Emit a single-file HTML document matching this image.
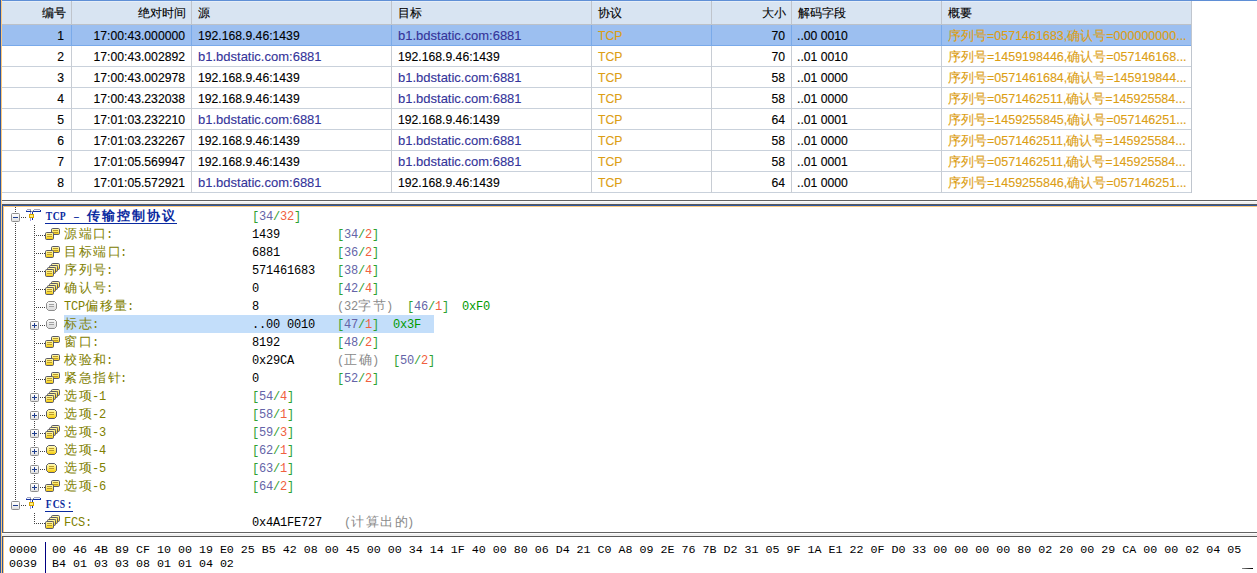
<!DOCTYPE html><html><head><meta charset="utf-8"><style>
*{margin:0;padding:0;box-sizing:border-box}
html,body{width:1257px;height:573px;overflow:hidden;background:#fff;position:relative}
.a{position:absolute}
.t{position:absolute;white-space:pre;font-family:"Liberation Sans",sans-serif;font-size:12.2px;line-height:20px;color:#000;-webkit-text-stroke:0.12px currentColor}
.m{position:absolute;white-space:pre;font-family:"Liberation Mono",monospace;font-size:11.67px;line-height:18px;color:#000}
.r{text-align:right}
.lk{color:#34349a;font-size:13px}
.or{color:#dc9e14}
.sm{font-size:12.5px}
.cj{position:absolute;white-space:pre;font-family:"Liberation Sans",sans-serif;font-size:12.5px;letter-spacing:1.5px;line-height:18px;font-weight:300}
.as{position:absolute;white-space:pre;font-family:"Liberation Mono",monospace;font-size:12px;letter-spacing:-0.2px;line-height:18px;margin-top:1px}
.bs{position:absolute;width:7px;text-align:center;white-space:pre;font-family:"Liberation Serif",serif;font-weight:bold;font-size:12px;line-height:18px;transform:scaleX(.8)}
.hx{position:absolute;white-space:pre;font-family:"Liberation Mono",monospace;font-size:11.67px;line-height:14px;color:#000}
</style></head><body>

<div class="a" style="left:0;top:0;width:1px;height:573px;background:#2e58a0"></div>
<div class="a" style="left:1px;top:0;width:1px;height:573px;background:#fdc87c"></div>
<div class="a" style="left:2px;top:0;width:1255px;height:1px;background:#5f8fd6"></div>
<div class="a" style="left:2px;top:1px;width:1190px;height:23px;background:#d8e4f2"></div>
<div class="a" style="left:2px;top:1px;width:1190px;height:1px;background:#e6eef8"></div>
<div class="a" style="left:2px;top:24px;width:1190px;height:1px;background:#bcc1c8"></div>
<div class="a" style="left:71px;top:1px;width:1px;height:24px;background:#bfc4cc"></div>
<div class="a" style="left:191px;top:1px;width:1px;height:24px;background:#bfc4cc"></div>
<div class="a" style="left:391px;top:1px;width:1px;height:24px;background:#bfc4cc"></div>
<div class="a" style="left:591px;top:1px;width:1px;height:24px;background:#bfc4cc"></div>
<div class="a" style="left:711px;top:1px;width:1px;height:24px;background:#bfc4cc"></div>
<div class="a" style="left:791px;top:1px;width:1px;height:24px;background:#bfc4cc"></div>
<div class="a" style="left:941px;top:1px;width:1px;height:24px;background:#bfc4cc"></div>
<div class="a" style="left:1191px;top:1px;width:1px;height:24px;background:#bfc4cc"></div>
<div class="a" style="left:2px;top:25px;width:1190px;height:21px;background:#9cbff0"></div>
<div class="a" style="left:2px;top:45px;width:1190px;height:1px;background:#78a9ea"></div>
<div class="a" style="left:71px;top:25px;width:1px;height:21px;background:#7aaae9"></div>
<div class="a" style="left:191px;top:25px;width:1px;height:21px;background:#7aaae9"></div>
<div class="a" style="left:391px;top:25px;width:1px;height:21px;background:#7aaae9"></div>
<div class="a" style="left:591px;top:25px;width:1px;height:21px;background:#7aaae9"></div>
<div class="a" style="left:711px;top:25px;width:1px;height:21px;background:#7aaae9"></div>
<div class="a" style="left:791px;top:25px;width:1px;height:21px;background:#7aaae9"></div>
<div class="a" style="left:941px;top:25px;width:1px;height:21px;background:#7aaae9"></div>
<div class="a" style="left:1191px;top:25px;width:1px;height:21px;background:#7aaae9"></div>
<div class="a" style="left:2px;top:66px;width:1190px;height:1px;background:#c9d1db"></div>
<div class="a" style="left:71px;top:46px;width:1px;height:21px;background:#c8cdd4"></div>
<div class="a" style="left:191px;top:46px;width:1px;height:21px;background:#c8cdd4"></div>
<div class="a" style="left:391px;top:46px;width:1px;height:21px;background:#c8cdd4"></div>
<div class="a" style="left:591px;top:46px;width:1px;height:21px;background:#c8cdd4"></div>
<div class="a" style="left:711px;top:46px;width:1px;height:21px;background:#c8cdd4"></div>
<div class="a" style="left:791px;top:46px;width:1px;height:21px;background:#c8cdd4"></div>
<div class="a" style="left:941px;top:46px;width:1px;height:21px;background:#c8cdd4"></div>
<div class="a" style="left:1191px;top:46px;width:1px;height:21px;background:#c8cdd4"></div>
<div class="a" style="left:2px;top:87px;width:1190px;height:1px;background:#c9d1db"></div>
<div class="a" style="left:71px;top:67px;width:1px;height:21px;background:#c8cdd4"></div>
<div class="a" style="left:191px;top:67px;width:1px;height:21px;background:#c8cdd4"></div>
<div class="a" style="left:391px;top:67px;width:1px;height:21px;background:#c8cdd4"></div>
<div class="a" style="left:591px;top:67px;width:1px;height:21px;background:#c8cdd4"></div>
<div class="a" style="left:711px;top:67px;width:1px;height:21px;background:#c8cdd4"></div>
<div class="a" style="left:791px;top:67px;width:1px;height:21px;background:#c8cdd4"></div>
<div class="a" style="left:941px;top:67px;width:1px;height:21px;background:#c8cdd4"></div>
<div class="a" style="left:1191px;top:67px;width:1px;height:21px;background:#c8cdd4"></div>
<div class="a" style="left:2px;top:108px;width:1190px;height:1px;background:#c9d1db"></div>
<div class="a" style="left:71px;top:88px;width:1px;height:21px;background:#c8cdd4"></div>
<div class="a" style="left:191px;top:88px;width:1px;height:21px;background:#c8cdd4"></div>
<div class="a" style="left:391px;top:88px;width:1px;height:21px;background:#c8cdd4"></div>
<div class="a" style="left:591px;top:88px;width:1px;height:21px;background:#c8cdd4"></div>
<div class="a" style="left:711px;top:88px;width:1px;height:21px;background:#c8cdd4"></div>
<div class="a" style="left:791px;top:88px;width:1px;height:21px;background:#c8cdd4"></div>
<div class="a" style="left:941px;top:88px;width:1px;height:21px;background:#c8cdd4"></div>
<div class="a" style="left:1191px;top:88px;width:1px;height:21px;background:#c8cdd4"></div>
<div class="a" style="left:2px;top:129px;width:1190px;height:1px;background:#c9d1db"></div>
<div class="a" style="left:71px;top:109px;width:1px;height:21px;background:#c8cdd4"></div>
<div class="a" style="left:191px;top:109px;width:1px;height:21px;background:#c8cdd4"></div>
<div class="a" style="left:391px;top:109px;width:1px;height:21px;background:#c8cdd4"></div>
<div class="a" style="left:591px;top:109px;width:1px;height:21px;background:#c8cdd4"></div>
<div class="a" style="left:711px;top:109px;width:1px;height:21px;background:#c8cdd4"></div>
<div class="a" style="left:791px;top:109px;width:1px;height:21px;background:#c8cdd4"></div>
<div class="a" style="left:941px;top:109px;width:1px;height:21px;background:#c8cdd4"></div>
<div class="a" style="left:1191px;top:109px;width:1px;height:21px;background:#c8cdd4"></div>
<div class="a" style="left:2px;top:150px;width:1190px;height:1px;background:#c9d1db"></div>
<div class="a" style="left:71px;top:130px;width:1px;height:21px;background:#c8cdd4"></div>
<div class="a" style="left:191px;top:130px;width:1px;height:21px;background:#c8cdd4"></div>
<div class="a" style="left:391px;top:130px;width:1px;height:21px;background:#c8cdd4"></div>
<div class="a" style="left:591px;top:130px;width:1px;height:21px;background:#c8cdd4"></div>
<div class="a" style="left:711px;top:130px;width:1px;height:21px;background:#c8cdd4"></div>
<div class="a" style="left:791px;top:130px;width:1px;height:21px;background:#c8cdd4"></div>
<div class="a" style="left:941px;top:130px;width:1px;height:21px;background:#c8cdd4"></div>
<div class="a" style="left:1191px;top:130px;width:1px;height:21px;background:#c8cdd4"></div>
<div class="a" style="left:2px;top:171px;width:1190px;height:1px;background:#c9d1db"></div>
<div class="a" style="left:71px;top:151px;width:1px;height:21px;background:#c8cdd4"></div>
<div class="a" style="left:191px;top:151px;width:1px;height:21px;background:#c8cdd4"></div>
<div class="a" style="left:391px;top:151px;width:1px;height:21px;background:#c8cdd4"></div>
<div class="a" style="left:591px;top:151px;width:1px;height:21px;background:#c8cdd4"></div>
<div class="a" style="left:711px;top:151px;width:1px;height:21px;background:#c8cdd4"></div>
<div class="a" style="left:791px;top:151px;width:1px;height:21px;background:#c8cdd4"></div>
<div class="a" style="left:941px;top:151px;width:1px;height:21px;background:#c8cdd4"></div>
<div class="a" style="left:1191px;top:151px;width:1px;height:21px;background:#c8cdd4"></div>
<div class="a" style="left:2px;top:192px;width:1190px;height:1px;background:#c9d1db"></div>
<div class="a" style="left:71px;top:172px;width:1px;height:21px;background:#c8cdd4"></div>
<div class="a" style="left:191px;top:172px;width:1px;height:21px;background:#c8cdd4"></div>
<div class="a" style="left:391px;top:172px;width:1px;height:21px;background:#c8cdd4"></div>
<div class="a" style="left:591px;top:172px;width:1px;height:21px;background:#c8cdd4"></div>
<div class="a" style="left:711px;top:172px;width:1px;height:21px;background:#c8cdd4"></div>
<div class="a" style="left:791px;top:172px;width:1px;height:21px;background:#c8cdd4"></div>
<div class="a" style="left:941px;top:172px;width:1px;height:21px;background:#c8cdd4"></div>
<div class="a" style="left:1191px;top:172px;width:1px;height:21px;background:#c8cdd4"></div>
<div class="t r" style="left:2px;top:3px;width:64px">编号</div>
<div class="t r" style="left:72px;top:3px;width:114px">绝对时间</div>
<div class="t" style="left:198px;top:3px">源</div>
<div class="t" style="left:398px;top:3px">目标</div>
<div class="t" style="left:598px;top:3px">协议</div>
<div class="t r" style="left:712px;top:3px;width:74px">大小</div>
<div class="t" style="left:798px;top:3px">解码字段</div>
<div class="t" style="left:948px;top:3px">概要</div>
<div class="t r" style="left:2px;top:26px;width:62px">1</div>
<div class="t r" style="left:72px;top:26px;width:113px">17:00:43.000000</div>
<div class="t" style="left:198px;top:26px">192.168.9.46:1439</div>
<div class="t lk" style="left:398px;top:26px">b1.bdstatic.com:6881</div>
<div class="t or" style="left:598px;top:26px">TCP</div>
<div class="t r" style="left:712px;top:26px;width:73px">70</div>
<div class="t" style="left:797px;top:26px">..00 0010</div>
<div class="t or sm" style="left:948px;top:26px">序列号=0571461683,确认号=000000000...</div>
<div class="t r" style="left:2px;top:47px;width:62px">2</div>
<div class="t r" style="left:72px;top:47px;width:113px">17:00:43.002892</div>
<div class="t lk" style="left:198px;top:47px">b1.bdstatic.com:6881</div>
<div class="t" style="left:398px;top:47px">192.168.9.46:1439</div>
<div class="t or" style="left:598px;top:47px">TCP</div>
<div class="t r" style="left:712px;top:47px;width:73px">70</div>
<div class="t" style="left:797px;top:47px">..01 0010</div>
<div class="t or sm" style="left:948px;top:47px">序列号=1459198446,确认号=057146168...</div>
<div class="t r" style="left:2px;top:68px;width:62px">3</div>
<div class="t r" style="left:72px;top:68px;width:113px">17:00:43.002978</div>
<div class="t" style="left:198px;top:68px">192.168.9.46:1439</div>
<div class="t lk" style="left:398px;top:68px">b1.bdstatic.com:6881</div>
<div class="t or" style="left:598px;top:68px">TCP</div>
<div class="t r" style="left:712px;top:68px;width:73px">58</div>
<div class="t" style="left:797px;top:68px">..01 0000</div>
<div class="t or sm" style="left:948px;top:68px">序列号=0571461684,确认号=145919844...</div>
<div class="t r" style="left:2px;top:89px;width:62px">4</div>
<div class="t r" style="left:72px;top:89px;width:113px">17:00:43.232038</div>
<div class="t" style="left:198px;top:89px">192.168.9.46:1439</div>
<div class="t lk" style="left:398px;top:89px">b1.bdstatic.com:6881</div>
<div class="t or" style="left:598px;top:89px">TCP</div>
<div class="t r" style="left:712px;top:89px;width:73px">58</div>
<div class="t" style="left:797px;top:89px">..01 0000</div>
<div class="t or sm" style="left:948px;top:89px">序列号=0571462511,确认号=145925584...</div>
<div class="t r" style="left:2px;top:110px;width:62px">5</div>
<div class="t r" style="left:72px;top:110px;width:113px">17:01:03.232210</div>
<div class="t lk" style="left:198px;top:110px">b1.bdstatic.com:6881</div>
<div class="t" style="left:398px;top:110px">192.168.9.46:1439</div>
<div class="t or" style="left:598px;top:110px">TCP</div>
<div class="t r" style="left:712px;top:110px;width:73px">64</div>
<div class="t" style="left:797px;top:110px">..01 0001</div>
<div class="t or sm" style="left:948px;top:110px">序列号=1459255845,确认号=057146251...</div>
<div class="t r" style="left:2px;top:131px;width:62px">6</div>
<div class="t r" style="left:72px;top:131px;width:113px">17:01:03.232267</div>
<div class="t" style="left:198px;top:131px">192.168.9.46:1439</div>
<div class="t lk" style="left:398px;top:131px">b1.bdstatic.com:6881</div>
<div class="t or" style="left:598px;top:131px">TCP</div>
<div class="t r" style="left:712px;top:131px;width:73px">58</div>
<div class="t" style="left:797px;top:131px">..01 0000</div>
<div class="t or sm" style="left:948px;top:131px">序列号=0571462511,确认号=145925584...</div>
<div class="t r" style="left:2px;top:152px;width:62px">7</div>
<div class="t r" style="left:72px;top:152px;width:113px">17:01:05.569947</div>
<div class="t" style="left:198px;top:152px">192.168.9.46:1439</div>
<div class="t lk" style="left:398px;top:152px">b1.bdstatic.com:6881</div>
<div class="t or" style="left:598px;top:152px">TCP</div>
<div class="t r" style="left:712px;top:152px;width:73px">58</div>
<div class="t" style="left:797px;top:152px">..01 0001</div>
<div class="t or sm" style="left:948px;top:152px">序列号=0571462511,确认号=145925584...</div>
<div class="t r" style="left:2px;top:173px;width:62px">8</div>
<div class="t r" style="left:72px;top:173px;width:113px">17:01:05.572921</div>
<div class="t lk" style="left:198px;top:173px">b1.bdstatic.com:6881</div>
<div class="t" style="left:398px;top:173px">192.168.9.46:1439</div>
<div class="t or" style="left:598px;top:173px">TCP</div>
<div class="t r" style="left:712px;top:173px;width:73px">64</div>
<div class="t" style="left:797px;top:173px">..01 0000</div>
<div class="t or sm" style="left:948px;top:173px">序列号=1459255846,确认号=057146251...</div>
<div class="a" style="left:1191px;top:1px;width:1px;height:192px;background:#c0c6ce"></div>
<div class="a" style="left:2px;top:200px;width:1255px;height:1px;background:#646464"></div>
<div class="a" style="left:2px;top:201px;width:1255px;height:1px;background:#fbfbfb"></div>
<div class="a" style="left:2px;top:202px;width:1255px;height:2px;background:#efefef"></div>
<div class="a" style="left:2px;top:204px;width:1255px;height:1px;background:#595959"></div>
<div class="a" style="left:2px;top:205px;width:1255px;height:1px;background:#2e58a0"></div>
<div class="a" style="left:3px;top:206px;width:1254px;height:1px;background:#fdc87c"></div>
<div class="a" style="left:2px;top:205px;width:1px;height:368px;background:#2e58a0"></div>
<div class="a" style="left:3px;top:206px;width:1px;height:367px;background:#fdc87c"></div>
<svg width="0" height="0" style="position:absolute"><defs><linearGradient id="gy" x1="0" y1="0" x2="0" y2="1"><stop offset="0" stop-color="#fffbc0"/><stop offset=".6" stop-color="#ffe858"/><stop offset="1" stop-color="#f0c000"/></linearGradient><linearGradient id="gg" x1="0" y1="0" x2="0" y2="1"><stop offset="0" stop-color="#fafafa"/><stop offset="1" stop-color="#d8d8d8"/></linearGradient><linearGradient id="gb" x1="0" y1="0" x2="0" y2="1"><stop offset="0" stop-color="#ffffff"/><stop offset=".5" stop-color="#f4f4f4"/><stop offset="1" stop-color="#dcdcdc"/></linearGradient></defs></svg>
<div class="a" style="left:64px;top:315px;width:370px;height:18px;background:#c3defa"></div>
<div class="a" style="left:15px;top:207px;width:1px;height:5px;background:repeating-linear-gradient(#404040 0 1px,transparent 1px 2px)"></div>
<div class="a" style="left:15px;top:223px;width:1px;height:277px;background:repeating-linear-gradient(#404040 0 1px,transparent 1px 2px)"></div>
<div class="a" style="left:34px;top:225px;width:1px;height:257px;background:repeating-linear-gradient(#404040 0 1px,transparent 1px 2px)"></div>
<div class="a" style="left:34px;top:513px;width:1px;height:11px;background:repeating-linear-gradient(#404040 0 1px,transparent 1px 2px)"></div>
<svg class="a" style="left:11px;top:213px" width="9" height="9"><rect x=".5" y=".5" width="8" height="8" rx="1" fill="url(#gb)" stroke="#8e8e8e"/><path d="M2 4.5h5" stroke="#1c3c8c"/></svg>
<div class="a" style="left:21px;top:217px;width:5px;height:1px;background:repeating-linear-gradient(90deg,#404040 0 1px,transparent 1px 2px)"></div>
<svg class="a" style="left:24px;top:207px" width="20" height="18" shape-rendering="crispEdges"><path d="M3 2.5h4M10 2.5h6" stroke="#a8a8bc"/><path d="M3 3.5h3M10 3.5h6" stroke="#eef4ff"/><path d="M2 3.5h1" stroke="#9a9ae0"/><path d="M16 3.5h1" stroke="#1030a0"/><path d="M2 4.5h5M9 4.5h8" stroke="#1030a0"/><path d="M6 3.5h1M9 3.5h1M7 4.5h2" stroke="#9090a0"/><path d="M6.5 5v2M6.5 11v3" stroke="#9a9ae6"/><path d="M8.5 5v2M8.5 11v2" stroke="#1030a0"/><rect x="5" y="7" width="5" height="4" fill="#d8a400"/><rect x="6" y="8" width="3" height="2" fill="#fff27a"/></svg>
<div class="bs" style="left:45px;top:207px;color:#0a2aa0">T</div>
<div class="bs" style="left:52px;top:207px;color:#0a2aa0">C</div>
<div class="bs" style="left:59px;top:207px;color:#0a2aa0">P</div>
<div class="bs" style="left:73px;top:207px;color:#0a2aa0">&#8211;</div>
<div class="cj" style="left:87px;top:207px;color:#0a2aa0;font-weight:bold;font-size:13px;letter-spacing:2px">传输控制协议</div>
<div class="a" style="left:45px;top:223px;width:132px;height:1px;background:#0a2aa0"></div>
<div class="as" style="left:252px;top:207px;color:#30a030">[</div>
<div class="as" style="left:259px;top:207px;color:#6464a8">34</div>
<div class="as" style="left:273px;top:207px;color:#30a030">/</div>
<div class="as" style="left:280px;top:207px;color:#f06040">32</div>
<div class="as" style="left:294px;top:207px;color:#30a030">]</div>
<div class="a" style="left:36px;top:235px;width:9px;height:1px;background:repeating-linear-gradient(90deg,#404040 0 1px,transparent 1px 2px)"></div>
<svg class="a" style="left:43px;top:225px" width="20" height="18"><rect x="8.5" y="3.5" width="8" height="6" rx="1.2" fill="url(#gy)" stroke="#5a5a66" stroke-width="1"/><path d="M10 5.5h5M10 7.5h5" stroke="#b8982c" stroke-width="1"/><rect x="2.5" y="7.5" width="8" height="7" rx="1.2" fill="url(#gy)" stroke="#5a5a66" stroke-width="1"/><path d="M4 9.5h5M4 11.5h5" stroke="#b8982c" stroke-width="1"/></svg>
<div class="cj" style="left:64px;top:225px;color:#808000">源端口</div>
<div class="as" style="left:106px;top:225px;color:#808000">:</div>
<div class="as" style="left:252px;top:225px;color:#000">1439</div>
<div class="as" style="left:337px;top:225px;color:#30a030">[</div>
<div class="as" style="left:344px;top:225px;color:#6464a8">34</div>
<div class="as" style="left:358px;top:225px;color:#30a030">/</div>
<div class="as" style="left:365px;top:225px;color:#f06040">2</div>
<div class="as" style="left:372px;top:225px;color:#30a030">]</div>
<div class="a" style="left:36px;top:253px;width:9px;height:1px;background:repeating-linear-gradient(90deg,#404040 0 1px,transparent 1px 2px)"></div>
<svg class="a" style="left:43px;top:243px" width="20" height="18"><rect x="8.5" y="3.5" width="8" height="6" rx="1.2" fill="url(#gy)" stroke="#5a5a66" stroke-width="1"/><path d="M10 5.5h5M10 7.5h5" stroke="#b8982c" stroke-width="1"/><rect x="2.5" y="7.5" width="8" height="7" rx="1.2" fill="url(#gy)" stroke="#5a5a66" stroke-width="1"/><path d="M4 9.5h5M4 11.5h5" stroke="#b8982c" stroke-width="1"/></svg>
<div class="cj" style="left:64px;top:243px;color:#808000">目标端口</div>
<div class="as" style="left:120px;top:243px;color:#808000">:</div>
<div class="as" style="left:252px;top:243px;color:#000">6881</div>
<div class="as" style="left:337px;top:243px;color:#30a030">[</div>
<div class="as" style="left:344px;top:243px;color:#6464a8">36</div>
<div class="as" style="left:358px;top:243px;color:#30a030">/</div>
<div class="as" style="left:365px;top:243px;color:#f06040">2</div>
<div class="as" style="left:372px;top:243px;color:#30a030">]</div>
<div class="a" style="left:36px;top:271px;width:9px;height:1px;background:repeating-linear-gradient(90deg,#404040 0 1px,transparent 1px 2px)"></div>
<svg class="a" style="left:43px;top:261px" width="20" height="18"><rect x="8.5" y="2.5" width="8" height="6" rx="1.2" fill="url(#gy)" stroke="#5a5a66" stroke-width="1"/><path d="M10 4.5h5M10 6.5h5" stroke="#b8982c" stroke-width="1"/><rect x="6.5" y="4.5" width="8" height="6" rx="1.2" fill="url(#gy)" stroke="#5a5a66" stroke-width="1"/><path d="M8 6.5h5M8 8.5h5" stroke="#b8982c" stroke-width="1"/><rect x="4.5" y="6.5" width="8" height="6" rx="1.2" fill="url(#gy)" stroke="#5a5a66" stroke-width="1"/><path d="M6 8.5h5M6 10.5h5" stroke="#b8982c" stroke-width="1"/><rect x="2.5" y="8.5" width="8" height="7" rx="1.2" fill="url(#gy)" stroke="#5a5a66" stroke-width="1"/><path d="M4 10.5h5M4 12.5h5" stroke="#b8982c" stroke-width="1"/></svg>
<div class="cj" style="left:64px;top:261px;color:#808000">序列号</div>
<div class="as" style="left:106px;top:261px;color:#808000">:</div>
<div class="as" style="left:252px;top:261px;color:#000">571461683</div>
<div class="as" style="left:337px;top:261px;color:#30a030">[</div>
<div class="as" style="left:344px;top:261px;color:#6464a8">38</div>
<div class="as" style="left:358px;top:261px;color:#30a030">/</div>
<div class="as" style="left:365px;top:261px;color:#f06040">4</div>
<div class="as" style="left:372px;top:261px;color:#30a030">]</div>
<div class="a" style="left:36px;top:289px;width:9px;height:1px;background:repeating-linear-gradient(90deg,#404040 0 1px,transparent 1px 2px)"></div>
<svg class="a" style="left:43px;top:279px" width="20" height="18"><rect x="8.5" y="2.5" width="8" height="6" rx="1.2" fill="url(#gy)" stroke="#5a5a66" stroke-width="1"/><path d="M10 4.5h5M10 6.5h5" stroke="#b8982c" stroke-width="1"/><rect x="6.5" y="4.5" width="8" height="6" rx="1.2" fill="url(#gy)" stroke="#5a5a66" stroke-width="1"/><path d="M8 6.5h5M8 8.5h5" stroke="#b8982c" stroke-width="1"/><rect x="4.5" y="6.5" width="8" height="6" rx="1.2" fill="url(#gy)" stroke="#5a5a66" stroke-width="1"/><path d="M6 8.5h5M6 10.5h5" stroke="#b8982c" stroke-width="1"/><rect x="2.5" y="8.5" width="8" height="7" rx="1.2" fill="url(#gy)" stroke="#5a5a66" stroke-width="1"/><path d="M4 10.5h5M4 12.5h5" stroke="#b8982c" stroke-width="1"/></svg>
<div class="cj" style="left:64px;top:279px;color:#808000">确认号</div>
<div class="as" style="left:106px;top:279px;color:#808000">:</div>
<div class="as" style="left:252px;top:279px;color:#000">0</div>
<div class="as" style="left:337px;top:279px;color:#30a030">[</div>
<div class="as" style="left:344px;top:279px;color:#6464a8">42</div>
<div class="as" style="left:358px;top:279px;color:#30a030">/</div>
<div class="as" style="left:365px;top:279px;color:#f06040">4</div>
<div class="as" style="left:372px;top:279px;color:#30a030">]</div>
<div class="a" style="left:36px;top:307px;width:9px;height:1px;background:repeating-linear-gradient(90deg,#404040 0 1px,transparent 1px 2px)"></div>
<svg class="a" style="left:43px;top:297px" width="20" height="18"><path d="M5.5 4.5h6l2 2v5l-2 2h-6l-2-2v-5z" fill="url(#gg)" stroke="#8c8c8c"/><path d="M6 7.5h5M6 9.5h5" stroke="#a0a0a0"/></svg>
<div class="as" style="left:64px;top:297px;color:#808000">TCP</div>
<div class="cj" style="left:85px;top:297px;color:#808000">偏移量</div>
<div class="as" style="left:127px;top:297px;color:#808000">:</div>
<div class="as" style="left:252px;top:297px;color:#000">8</div>
<div class="as" style="left:337px;top:297px;color:#8a8a8a">(32</div>
<div class="cj" style="left:358px;top:297px;color:#8a8a8a">字节</div>
<div class="as" style="left:386px;top:297px;color:#8a8a8a">)</div>
<div class="as" style="left:407px;top:297px;color:#30a030">[</div>
<div class="as" style="left:414px;top:297px;color:#6464a8">46</div>
<div class="as" style="left:428px;top:297px;color:#30a030">/</div>
<div class="as" style="left:435px;top:297px;color:#f06040">1</div>
<div class="as" style="left:442px;top:297px;color:#30a030">]</div>
<div class="as" style="left:462px;top:297px;color:#009a00">0xF0</div>
<svg class="a" style="left:30px;top:321px" width="9" height="9"><rect x=".5" y=".5" width="8" height="8" rx="1" fill="url(#gb)" stroke="#8e8e8e"/><path d="M2 4.5h5" stroke="#1c3c8c"/><path d="M4.5 2v5" stroke="#1c3c8c"/></svg>
<div class="a" style="left:40px;top:325px;width:5px;height:1px;background:repeating-linear-gradient(90deg,#404040 0 1px,transparent 1px 2px)"></div>
<svg class="a" style="left:43px;top:315px" width="20" height="18"><path d="M5.5 4.5h6l2 2v5l-2 2h-6l-2-2v-5z" fill="url(#gg)" stroke="#8c8c8c"/><path d="M6 7.5h5M6 9.5h5" stroke="#a0a0a0"/></svg>
<div class="cj" style="left:64px;top:315px;color:#808000">标志</div>
<div class="as" style="left:92px;top:315px;color:#808000">:</div>
<div class="as" style="left:252px;top:315px;color:#000">..00 0010</div>
<div class="as" style="left:337px;top:315px;color:#30a030">[</div>
<div class="as" style="left:344px;top:315px;color:#6464a8">47</div>
<div class="as" style="left:358px;top:315px;color:#30a030">/</div>
<div class="as" style="left:365px;top:315px;color:#f06040">1</div>
<div class="as" style="left:372px;top:315px;color:#30a030">]</div>
<div class="as" style="left:393px;top:315px;color:#009a00">0x3F</div>
<div class="a" style="left:36px;top:343px;width:9px;height:1px;background:repeating-linear-gradient(90deg,#404040 0 1px,transparent 1px 2px)"></div>
<svg class="a" style="left:43px;top:333px" width="20" height="18"><rect x="8.5" y="3.5" width="8" height="6" rx="1.2" fill="url(#gy)" stroke="#5a5a66" stroke-width="1"/><path d="M10 5.5h5M10 7.5h5" stroke="#b8982c" stroke-width="1"/><rect x="2.5" y="7.5" width="8" height="7" rx="1.2" fill="url(#gy)" stroke="#5a5a66" stroke-width="1"/><path d="M4 9.5h5M4 11.5h5" stroke="#b8982c" stroke-width="1"/></svg>
<div class="cj" style="left:64px;top:333px;color:#808000">窗口</div>
<div class="as" style="left:92px;top:333px;color:#808000">:</div>
<div class="as" style="left:252px;top:333px;color:#000">8192</div>
<div class="as" style="left:337px;top:333px;color:#30a030">[</div>
<div class="as" style="left:344px;top:333px;color:#6464a8">48</div>
<div class="as" style="left:358px;top:333px;color:#30a030">/</div>
<div class="as" style="left:365px;top:333px;color:#f06040">2</div>
<div class="as" style="left:372px;top:333px;color:#30a030">]</div>
<div class="a" style="left:36px;top:361px;width:9px;height:1px;background:repeating-linear-gradient(90deg,#404040 0 1px,transparent 1px 2px)"></div>
<svg class="a" style="left:43px;top:351px" width="20" height="18"><rect x="8.5" y="3.5" width="8" height="6" rx="1.2" fill="url(#gy)" stroke="#5a5a66" stroke-width="1"/><path d="M10 5.5h5M10 7.5h5" stroke="#b8982c" stroke-width="1"/><rect x="2.5" y="7.5" width="8" height="7" rx="1.2" fill="url(#gy)" stroke="#5a5a66" stroke-width="1"/><path d="M4 9.5h5M4 11.5h5" stroke="#b8982c" stroke-width="1"/></svg>
<div class="cj" style="left:64px;top:351px;color:#808000">校验和</div>
<div class="as" style="left:106px;top:351px;color:#808000">:</div>
<div class="as" style="left:252px;top:351px;color:#000">0x29CA</div>
<div class="as" style="left:337px;top:351px;color:#8a8a8a">(</div>
<div class="cj" style="left:344px;top:351px;color:#8a8a8a">正确</div>
<div class="as" style="left:372px;top:351px;color:#8a8a8a">)</div>
<div class="as" style="left:393px;top:351px;color:#30a030">[</div>
<div class="as" style="left:400px;top:351px;color:#6464a8">50</div>
<div class="as" style="left:414px;top:351px;color:#30a030">/</div>
<div class="as" style="left:421px;top:351px;color:#f06040">2</div>
<div class="as" style="left:428px;top:351px;color:#30a030">]</div>
<div class="a" style="left:36px;top:379px;width:9px;height:1px;background:repeating-linear-gradient(90deg,#404040 0 1px,transparent 1px 2px)"></div>
<svg class="a" style="left:43px;top:369px" width="20" height="18"><rect x="8.5" y="3.5" width="8" height="6" rx="1.2" fill="url(#gy)" stroke="#5a5a66" stroke-width="1"/><path d="M10 5.5h5M10 7.5h5" stroke="#b8982c" stroke-width="1"/><rect x="2.5" y="7.5" width="8" height="7" rx="1.2" fill="url(#gy)" stroke="#5a5a66" stroke-width="1"/><path d="M4 9.5h5M4 11.5h5" stroke="#b8982c" stroke-width="1"/></svg>
<div class="cj" style="left:64px;top:369px;color:#808000">紧急指针</div>
<div class="as" style="left:120px;top:369px;color:#808000">:</div>
<div class="as" style="left:252px;top:369px;color:#000">0</div>
<div class="as" style="left:337px;top:369px;color:#30a030">[</div>
<div class="as" style="left:344px;top:369px;color:#6464a8">52</div>
<div class="as" style="left:358px;top:369px;color:#30a030">/</div>
<div class="as" style="left:365px;top:369px;color:#f06040">2</div>
<div class="as" style="left:372px;top:369px;color:#30a030">]</div>
<svg class="a" style="left:30px;top:393px" width="9" height="9"><rect x=".5" y=".5" width="8" height="8" rx="1" fill="url(#gb)" stroke="#8e8e8e"/><path d="M2 4.5h5" stroke="#1c3c8c"/><path d="M4.5 2v5" stroke="#1c3c8c"/></svg>
<div class="a" style="left:40px;top:397px;width:5px;height:1px;background:repeating-linear-gradient(90deg,#404040 0 1px,transparent 1px 2px)"></div>
<svg class="a" style="left:43px;top:387px" width="20" height="18"><rect x="8.5" y="2.5" width="8" height="6" rx="1.2" fill="url(#gy)" stroke="#5a5a66" stroke-width="1"/><path d="M10 4.5h5M10 6.5h5" stroke="#b8982c" stroke-width="1"/><rect x="6.5" y="4.5" width="8" height="6" rx="1.2" fill="url(#gy)" stroke="#5a5a66" stroke-width="1"/><path d="M8 6.5h5M8 8.5h5" stroke="#b8982c" stroke-width="1"/><rect x="4.5" y="6.5" width="8" height="6" rx="1.2" fill="url(#gy)" stroke="#5a5a66" stroke-width="1"/><path d="M6 8.5h5M6 10.5h5" stroke="#b8982c" stroke-width="1"/><rect x="2.5" y="8.5" width="8" height="7" rx="1.2" fill="url(#gy)" stroke="#5a5a66" stroke-width="1"/><path d="M4 10.5h5M4 12.5h5" stroke="#b8982c" stroke-width="1"/></svg>
<div class="cj" style="left:64px;top:387px;color:#808000">选项</div>
<div class="as" style="left:92px;top:387px;color:#808000">-1</div>
<div class="as" style="left:252px;top:387px;color:#30a030">[</div>
<div class="as" style="left:259px;top:387px;color:#6464a8">54</div>
<div class="as" style="left:273px;top:387px;color:#30a030">/</div>
<div class="as" style="left:280px;top:387px;color:#f06040">4</div>
<div class="as" style="left:287px;top:387px;color:#30a030">]</div>
<svg class="a" style="left:30px;top:411px" width="9" height="9"><rect x=".5" y=".5" width="8" height="8" rx="1" fill="url(#gb)" stroke="#8e8e8e"/><path d="M2 4.5h5" stroke="#1c3c8c"/><path d="M4.5 2v5" stroke="#1c3c8c"/></svg>
<div class="a" style="left:40px;top:415px;width:5px;height:1px;background:repeating-linear-gradient(90deg,#404040 0 1px,transparent 1px 2px)"></div>
<svg class="a" style="left:43px;top:405px" width="20" height="18"><path d="M5.5 4.5h6l2 2v5l-2 2h-6l-2-2v-5z" fill="url(#gy)" stroke="#5a5a66"/><path d="M6 7.5h5M6 9.5h5" stroke="#b8982c"/></svg>
<div class="cj" style="left:64px;top:405px;color:#808000">选项</div>
<div class="as" style="left:92px;top:405px;color:#808000">-2</div>
<div class="as" style="left:252px;top:405px;color:#30a030">[</div>
<div class="as" style="left:259px;top:405px;color:#6464a8">58</div>
<div class="as" style="left:273px;top:405px;color:#30a030">/</div>
<div class="as" style="left:280px;top:405px;color:#f06040">1</div>
<div class="as" style="left:287px;top:405px;color:#30a030">]</div>
<svg class="a" style="left:30px;top:429px" width="9" height="9"><rect x=".5" y=".5" width="8" height="8" rx="1" fill="url(#gb)" stroke="#8e8e8e"/><path d="M2 4.5h5" stroke="#1c3c8c"/><path d="M4.5 2v5" stroke="#1c3c8c"/></svg>
<div class="a" style="left:40px;top:433px;width:5px;height:1px;background:repeating-linear-gradient(90deg,#404040 0 1px,transparent 1px 2px)"></div>
<svg class="a" style="left:43px;top:423px" width="20" height="18"><rect x="8.5" y="2.5" width="8" height="6" rx="1.2" fill="url(#gy)" stroke="#5a5a66" stroke-width="1"/><path d="M10 4.5h5M10 6.5h5" stroke="#b8982c" stroke-width="1"/><rect x="6.5" y="4.5" width="8" height="6" rx="1.2" fill="url(#gy)" stroke="#5a5a66" stroke-width="1"/><path d="M8 6.5h5M8 8.5h5" stroke="#b8982c" stroke-width="1"/><rect x="4.5" y="6.5" width="8" height="6" rx="1.2" fill="url(#gy)" stroke="#5a5a66" stroke-width="1"/><path d="M6 8.5h5M6 10.5h5" stroke="#b8982c" stroke-width="1"/><rect x="2.5" y="8.5" width="8" height="7" rx="1.2" fill="url(#gy)" stroke="#5a5a66" stroke-width="1"/><path d="M4 10.5h5M4 12.5h5" stroke="#b8982c" stroke-width="1"/></svg>
<div class="cj" style="left:64px;top:423px;color:#808000">选项</div>
<div class="as" style="left:92px;top:423px;color:#808000">-3</div>
<div class="as" style="left:252px;top:423px;color:#30a030">[</div>
<div class="as" style="left:259px;top:423px;color:#6464a8">59</div>
<div class="as" style="left:273px;top:423px;color:#30a030">/</div>
<div class="as" style="left:280px;top:423px;color:#f06040">3</div>
<div class="as" style="left:287px;top:423px;color:#30a030">]</div>
<svg class="a" style="left:30px;top:447px" width="9" height="9"><rect x=".5" y=".5" width="8" height="8" rx="1" fill="url(#gb)" stroke="#8e8e8e"/><path d="M2 4.5h5" stroke="#1c3c8c"/><path d="M4.5 2v5" stroke="#1c3c8c"/></svg>
<div class="a" style="left:40px;top:451px;width:5px;height:1px;background:repeating-linear-gradient(90deg,#404040 0 1px,transparent 1px 2px)"></div>
<svg class="a" style="left:43px;top:441px" width="20" height="18"><path d="M5.5 4.5h6l2 2v5l-2 2h-6l-2-2v-5z" fill="url(#gy)" stroke="#5a5a66"/><path d="M6 7.5h5M6 9.5h5" stroke="#b8982c"/></svg>
<div class="cj" style="left:64px;top:441px;color:#808000">选项</div>
<div class="as" style="left:92px;top:441px;color:#808000">-4</div>
<div class="as" style="left:252px;top:441px;color:#30a030">[</div>
<div class="as" style="left:259px;top:441px;color:#6464a8">62</div>
<div class="as" style="left:273px;top:441px;color:#30a030">/</div>
<div class="as" style="left:280px;top:441px;color:#f06040">1</div>
<div class="as" style="left:287px;top:441px;color:#30a030">]</div>
<svg class="a" style="left:30px;top:465px" width="9" height="9"><rect x=".5" y=".5" width="8" height="8" rx="1" fill="url(#gb)" stroke="#8e8e8e"/><path d="M2 4.5h5" stroke="#1c3c8c"/><path d="M4.5 2v5" stroke="#1c3c8c"/></svg>
<div class="a" style="left:40px;top:469px;width:5px;height:1px;background:repeating-linear-gradient(90deg,#404040 0 1px,transparent 1px 2px)"></div>
<svg class="a" style="left:43px;top:459px" width="20" height="18"><path d="M5.5 4.5h6l2 2v5l-2 2h-6l-2-2v-5z" fill="url(#gy)" stroke="#5a5a66"/><path d="M6 7.5h5M6 9.5h5" stroke="#b8982c"/></svg>
<div class="cj" style="left:64px;top:459px;color:#808000">选项</div>
<div class="as" style="left:92px;top:459px;color:#808000">-5</div>
<div class="as" style="left:252px;top:459px;color:#30a030">[</div>
<div class="as" style="left:259px;top:459px;color:#6464a8">63</div>
<div class="as" style="left:273px;top:459px;color:#30a030">/</div>
<div class="as" style="left:280px;top:459px;color:#f06040">1</div>
<div class="as" style="left:287px;top:459px;color:#30a030">]</div>
<svg class="a" style="left:30px;top:483px" width="9" height="9"><rect x=".5" y=".5" width="8" height="8" rx="1" fill="url(#gb)" stroke="#8e8e8e"/><path d="M2 4.5h5" stroke="#1c3c8c"/><path d="M4.5 2v5" stroke="#1c3c8c"/></svg>
<div class="a" style="left:40px;top:487px;width:5px;height:1px;background:repeating-linear-gradient(90deg,#404040 0 1px,transparent 1px 2px)"></div>
<svg class="a" style="left:43px;top:477px" width="20" height="18"><rect x="8.5" y="3.5" width="8" height="6" rx="1.2" fill="url(#gy)" stroke="#5a5a66" stroke-width="1"/><path d="M10 5.5h5M10 7.5h5" stroke="#b8982c" stroke-width="1"/><rect x="2.5" y="7.5" width="8" height="7" rx="1.2" fill="url(#gy)" stroke="#5a5a66" stroke-width="1"/><path d="M4 9.5h5M4 11.5h5" stroke="#b8982c" stroke-width="1"/></svg>
<div class="cj" style="left:64px;top:477px;color:#808000">选项</div>
<div class="as" style="left:92px;top:477px;color:#808000">-6</div>
<div class="as" style="left:252px;top:477px;color:#30a030">[</div>
<div class="as" style="left:259px;top:477px;color:#6464a8">64</div>
<div class="as" style="left:273px;top:477px;color:#30a030">/</div>
<div class="as" style="left:280px;top:477px;color:#f06040">2</div>
<div class="as" style="left:287px;top:477px;color:#30a030">]</div>
<svg class="a" style="left:11px;top:501px" width="9" height="9"><rect x=".5" y=".5" width="8" height="8" rx="1" fill="url(#gb)" stroke="#8e8e8e"/><path d="M2 4.5h5" stroke="#1c3c8c"/></svg>
<div class="a" style="left:21px;top:505px;width:5px;height:1px;background:repeating-linear-gradient(90deg,#404040 0 1px,transparent 1px 2px)"></div>
<svg class="a" style="left:24px;top:495px" width="20" height="18" shape-rendering="crispEdges"><path d="M3 2.5h4M10 2.5h6" stroke="#a8a8bc"/><path d="M3 3.5h3M10 3.5h6" stroke="#eef4ff"/><path d="M2 3.5h1" stroke="#9a9ae0"/><path d="M16 3.5h1" stroke="#1030a0"/><path d="M2 4.5h5M9 4.5h8" stroke="#1030a0"/><path d="M6 3.5h1M9 3.5h1M7 4.5h2" stroke="#9090a0"/><path d="M6.5 5v2M6.5 11v3" stroke="#9a9ae6"/><path d="M8.5 5v2M8.5 11v2" stroke="#1030a0"/><rect x="5" y="7" width="5" height="4" fill="#d8a400"/><rect x="6" y="8" width="3" height="2" fill="#fff27a"/></svg>
<div class="bs" style="left:45px;top:495px;color:#0a2aa0">F</div>
<div class="bs" style="left:52px;top:495px;color:#0a2aa0">C</div>
<div class="bs" style="left:59px;top:495px;color:#0a2aa0">S</div>
<div class="bs" style="left:66px;top:495px;color:#0a2aa0">:</div>
<div class="a" style="left:45px;top:511px;width:28px;height:1px;background:#0a2aa0"></div>
<div class="a" style="left:36px;top:523px;width:9px;height:1px;background:repeating-linear-gradient(90deg,#404040 0 1px,transparent 1px 2px)"></div>
<svg class="a" style="left:43px;top:513px" width="20" height="18"><rect x="8.5" y="2.5" width="8" height="6" rx="1.2" fill="url(#gy)" stroke="#5a5a66" stroke-width="1"/><path d="M10 4.5h5M10 6.5h5" stroke="#b8982c" stroke-width="1"/><rect x="6.5" y="4.5" width="8" height="6" rx="1.2" fill="url(#gy)" stroke="#5a5a66" stroke-width="1"/><path d="M8 6.5h5M8 8.5h5" stroke="#b8982c" stroke-width="1"/><rect x="4.5" y="6.5" width="8" height="6" rx="1.2" fill="url(#gy)" stroke="#5a5a66" stroke-width="1"/><path d="M6 8.5h5M6 10.5h5" stroke="#b8982c" stroke-width="1"/><rect x="2.5" y="8.5" width="8" height="7" rx="1.2" fill="url(#gy)" stroke="#5a5a66" stroke-width="1"/><path d="M4 10.5h5M4 12.5h5" stroke="#b8982c" stroke-width="1"/></svg>
<div class="as" style="left:64px;top:513px;color:#808000">FCS:</div>
<div class="as" style="left:252px;top:513px;color:#000">0x4A1FE727</div>
<div class="as" style="left:344px;top:513px;color:#8a8a8a">(</div>
<div class="cj" style="left:351px;top:513px;color:#8a8a8a">计算出的</div>
<div class="as" style="left:407px;top:513px;color:#8a8a8a">)</div>
<div class="a" style="left:2px;top:532px;width:1255px;height:1px;background:#646464"></div>
<div class="a" style="left:2px;top:533px;width:1255px;height:1px;background:#fbfbfb"></div>
<div class="a" style="left:2px;top:534px;width:1255px;height:2px;background:#efefef"></div>
<div class="a" style="left:2px;top:536px;width:1255px;height:1px;background:#595959"></div>
<div class="a" style="left:45px;top:542px;width:1px;height:31px;background:#000080"></div>
<div class="hx" style="left:9px;top:543px">0000</div>
<div class="hx" style="left:9px;top:557px">0039</div>
<div class="hx" style="left:52px;top:543px">00 46 4B 89 CF 10 00 19 E0 25 B5 42 08 00 45 00 00 34 14 1F 40 00 80 06 D4 21 C0 A8 09 2E 76 7B D2 31 05 9F 1A E1 22 0F D0 33 00 00 00 00 80 02 20 00 29 CA 00 00 02 04 05</div>
<div class="hx" style="left:52px;top:557px">B4 01 03 03 08 01 01 04 02</div>
<div class="a" style="left:1242px;top:568px;width:11px;height:1px;background:linear-gradient(90deg,#888,#000)"></div>
</body></html>
